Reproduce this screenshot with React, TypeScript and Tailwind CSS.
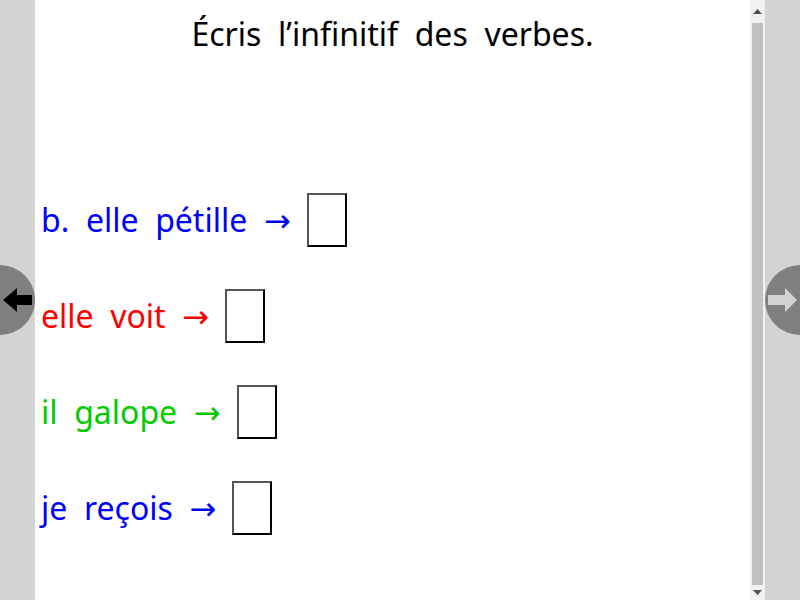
import React from "react";

const ROWS = [
  { text: "b.  elle  pétille", color: "text-[#0000ff]" },
  { text: "elle  voit", color: "text-[#ff0000]" },
  { text: "il  galope", color: "text-[#00cc00]" },
  { text: "je  reçois", color: "text-[#0000ff]" },
];

function AnswerBox() {
  return (
    <span className="inline-block w-[40px] h-[54px] border-2 border-t-[#555555] border-l-[#555555] border-b-black border-r-black bg-white" />
  );
}

export default function App() {
  return (
    <div
      className="flex w-[800px] h-[600px] bg-[#d3d3d3] overflow-hidden relative"
      style={{ fontFamily: '"Noto Sans", "Open Sans", sans-serif' }}
    >
      {/* left gutter */}
      <div className="w-[35px] shrink-0" />

      {/* page */}
      <div className="w-[715px] shrink-0 bg-white">
        <h1 className="pt-[12px] text-center text-[32px] leading-[44px] text-black whitespace-pre">
          Écris  l’infinitif  des  verbes.
        </h1>
        <div className="mt-[116px] pl-[6px] flex flex-col">
          {ROWS.map((row) => (
            <div key={row.text} className="h-[96px] flex items-center">
              <span className={`text-[32px] whitespace-pre ${row.color}`}>
                {row.text}
                {"  "}
                <span style={{ fontFamily: '"DejaVu Sans", sans-serif' }}>→</span>
              </span>
              <span className="ml-[16px] flex">
                <AnswerBox />
              </span>
            </div>
          ))}
        </div>
      </div>

      {/* scrollbar */}
      <div className="w-[15px] shrink-0 bg-[#f1f1f1] flex flex-col items-center">
        <div className="h-[23px] w-full flex items-center justify-center">
          <svg width="9" height="6" viewBox="0 0 9 6">
            <polygon points="4.5,0 9,5 0,5" fill="#505050" />
          </svg>
        </div>
        <div className="w-[11px] flex-1 bg-[#c1c1c1]" />
        <div className="h-[15px] w-full flex items-center justify-center">
          <svg width="9" height="6" viewBox="0 0 9 6">
            <polygon points="0,0 9,0 4.5,5" fill="#505050" />
          </svg>
        </div>
      </div>

      {/* right gutter */}
      <div className="w-[35px] shrink-0" />

      {/* previous button */}
      <button className="absolute left-0 top-[265px] w-[35px] h-[70px] rounded-r-full bg-[#808080] flex items-center">
        <svg width="35" height="70" viewBox="0 0 35 70">
          <polygon points="3,35 17,23 17,30 32,30 32,40 17,40 17,47" fill="#000000" />
        </svg>
      </button>

      {/* next button */}
      <button className="absolute right-0 top-[265px] w-[35px] h-[70px] rounded-l-full bg-[#808080] flex items-center">
        <svg width="35" height="70" viewBox="0 0 35 70">
          <polygon points="3,30 20,30 20,23 32,35 20,47 20,40 3,40" fill="#d3d3d3" />
        </svg>
      </button>
    </div>
  );
}
